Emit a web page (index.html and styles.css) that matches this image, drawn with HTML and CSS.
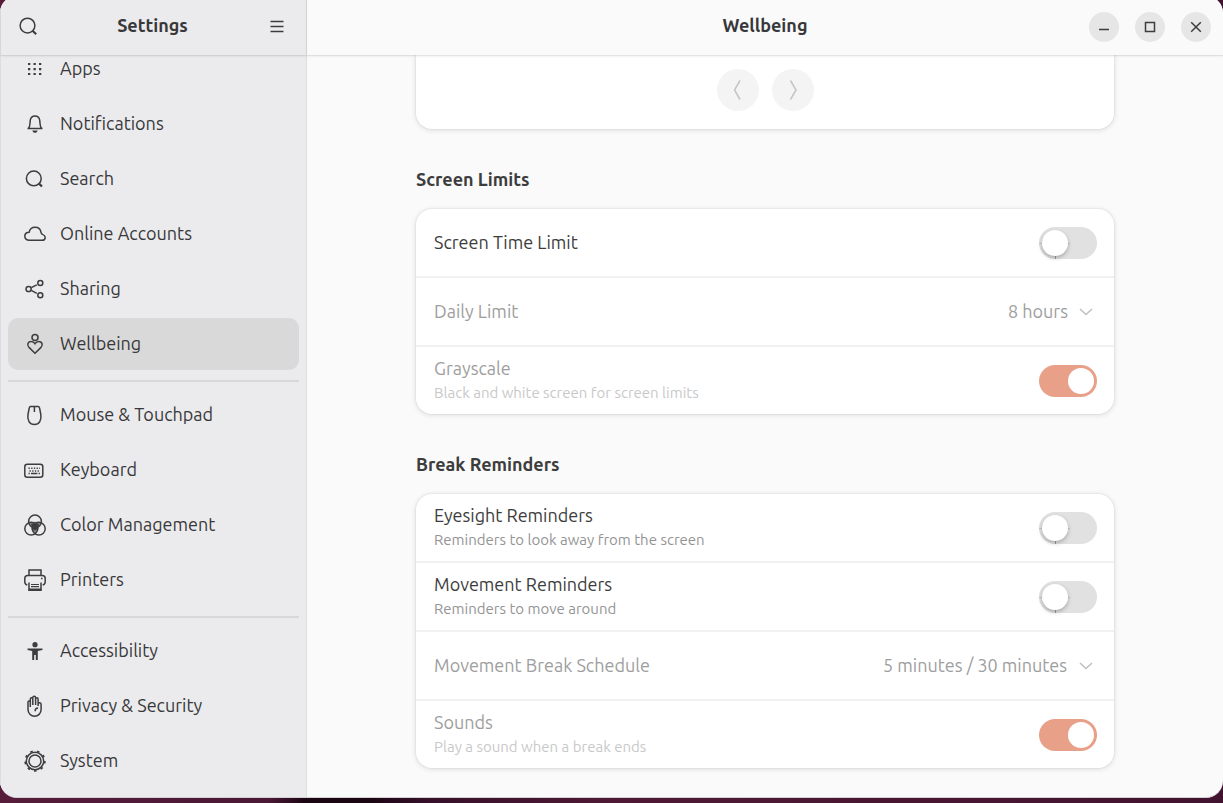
FILE: index.html
```html
<!DOCTYPE html>
<html lang="en">
<head>
<meta charset="utf-8">
<title>Settings – Wellbeing</title>
<link rel="stylesheet" href="styles.css">
</head>
<body>
<div class="window">
  <aside class="sidebar">
    <header class="bar side-bar">
      <button class="icon-button" aria-label="Search">
        <svg width="20" height="20" viewBox="0 0 20 20"><circle cx="9.500" cy="8.600" r="7.400"/><path d="M14.600 13.800l3.600 3.400" stroke-width="2.200"/></svg>
      </button>
      <h1 class="bar-title">Settings</h1>
      <button class="icon-button" aria-label="Main menu">
        <svg width="20" height="20" viewBox="0 0 20 20"><path d="M2.500 4.500h13M2.500 9.500h13M2.500 14.500h13"/></svg>
      </button>
    </header>
    <nav class="scroller" aria-label="Panels">
      <ul class="panels">
        <li><a class="panel" href="#apps"><svg class="icon" viewBox="0 0 22 22"><path class="solid" d="M4 5h2.300v2H4zM9.500 5h2.300v2H9.500zM15 5h2.300v2H15zM4 10h2.300v2.300H4zM9.500 10h2.300v2.300H9.500zM15 10h2.300v2.300H15zM4 15h2.300v2H4zM9.500 15h2.300v2H9.500zM15 15h2.300v2H15z"/></svg>Apps</a></li>
        <li><a class="panel" href="#notifications"><svg class="icon" viewBox="0 0 22 22"><path d="M3.500 15.500h15M4.500 15.200C6.300 13.500 5.800 10.500 6.300 7.200C6.700 4.300 8.500 3 11 3s4.300 1.300 4.700 4.200c.5 3.300 0 6.300 1.800 8"/><path class="solid" d="M8.300 17.500h5.400c-.5 1.600-1.400 2.300-2.700 2.300s-2.300-.7-2.700-2.300z"/></svg>Notifications</a></li>
        <li><a class="panel" href="#search"><svg class="icon" viewBox="0 0 22 22"><circle cx="9.800" cy="10.400" r="7.400"/><path d="M15 15.600l3 2.900" stroke-width="2.200"/></svg>Search</a></li>
        <li><a class="panel" href="#online"><svg class="icon" viewBox="0 0 22 22"><path d="M5.300 17.300C2.500 17.300.8 15.600.8 13.300c0-2.200 1.700-3.900 4.300-4C5.700 6 8.200 4.200 11.200 4.200c3.500 0 5.400 2.200 5.800 5.200.2 1.300.7 1.700 1.900 2.200 1.400.5 2.300 1.500 2.300 2.800 0 1.700-1.300 2.900-3.200 2.900z"/></svg>Online Accounts</a></li>
        <li><a class="panel" href="#sharing"><svg class="icon" viewBox="0 0 22 22"><circle cx="4.600" cy="11" r="2.600"/><circle cx="16.300" cy="5" r="2.500"/><circle cx="16.300" cy="17.300" r="2.500"/><path d="M7.300 9.700L12.800 6.800M7.300 12.300l5.500 3"/></svg>Sharing</a></li>
        <li><a class="panel selected" href="#wellbeing" aria-current="page"><svg class="icon" viewBox="0 0 22 22"><circle cx="11" cy="4.500" r="3"/><path d="M11 20.200L5 14.400C2.400 11.700 4.200 8.300 7.200 8.400c1.700 0 3 1 3.800 2.300.8-1.300 2.100-2.300 3.800-2.300 3 0 4.800 3.300 2.200 6z"/></svg>Wellbeing</a></li>
        <li class="divider" role="separator"></li>
        <li><a class="panel" href="#mouse"><svg class="icon" viewBox="0 0 22 22"><path d="M6.600 2.600h7.600c.8 0 1.100.5 1.400 1.600l1.200 6.300c1 5.600-1.500 9.900-6.400 9.900S3 16.100 4 10.500l1.200-6.300c.3-1.100.6-1.600 1.400-1.600zM10.400 3v5"/></svg>Mouse &amp; Touchpad</a></li>
        <li><a class="panel" href="#keyboard"><svg class="icon" viewBox="0 0 22 22"><rect x=".8" y="5.300" width="18" height="13" rx="2.500"/><path d="M4.500 9.300h11.500M5.500 11.900h10" stroke-dasharray="1.300 1.400"/><path d="M4.500 14.500h1.300M7 14.500h6.400M14.600 14.500h1.300"/></svg>Keyboard</a></li>
        <li><a class="panel" href="#color"><svg class="icon" viewBox="0 0 22 22"><path class="shade" d="M4.600 8.600c4-1.300 8.800-1.300 12.800 0l-2.400 4.800c-.3 3-1.700 5.500-4 6.800-2.300-1.300-3.700-3.800-4-6.800z"/><path class="solid" d="M7 10c2.500-1 5.500-1 8 0l-1.200 4c-1 1.500-1.500 2-2.800 2.400-1.300-.4-2-1-2.800-2.400z"/><circle cx="11" cy="7.500" r="6.400"/><circle cx="7.200" cy="14.700" r="6.400"/><circle cx="14.800" cy="14.700" r="6.400"/></svg>Color Management</a></li>
        <li><a class="panel" href="#printers"><svg class="icon" viewBox="0 0 22 22"><path d="M5 6.500V1h12v5.500M3.300 16C1.600 15.500.8 14.500.8 13V9.500c0-2 1.200-3 3-3h14.400c1.800 0 3 1 3 3V13c0 1.500-.8 2.500-2.500 3M17 9.500h1.500"/><path d="M7 15.500h8M7 17.700h8" stroke-width="1.200"/><path d="M5 13.500v7.500h12v-7.500"/><path class="solid" d="M4.500 19.500h13V22h-13z"/></svg>Printers</a></li>
        <li class="divider" role="separator"></li>
        <li><a class="panel" href="#accessibility"><svg class="icon" viewBox="0 0 22 22"><circle class="solid" cx="11" cy="4.700" r="2.600"/><path class="solid" d="M3.500 8.500h15v1.600l-4.700 1V20h-2v-5h-1.600v5h-2v-8.900l-4.700-1z"/></svg>Accessibility</a></li>
        <li><a class="panel" href="#privacy"><svg class="icon" viewBox="0 0 22 22"><path d="M4 13V7.200c0-1.700 2.300-1.700 2.300 0V12M6.300 11V4.200c0-1.800 2.500-1.800 2.500 0V10M8.800 9V2.700c0-1.800 2.800-1.800 2.800 0V10M11.600 4.200c0-1.800 2.500-1.800 2.500 0v6.900M14.100 11V9c.5-2 3-1.500 3 .5v5c0 4-3 6.700-6.600 6.700S4 18 4 14.500V13M14.100 13c-1.800 0-3 1.200-3 3.200"/></svg>Privacy &amp; Security</a></li>
        <li><a class="panel" href="#system"><svg class="icon" viewBox="0 0 22 22"><circle cx="11" cy="11" r="8.700"/><circle cx="11" cy="11" r="6"/><circle cx="11" cy="11" r="9.900" stroke-width="1.600" stroke-dasharray="2.600 4.310"/></svg>System</a></li>
      </ul>
    </nav>
  </aside>
  <main class="content">
    <header class="bar main-bar">
      <h1 class="bar-title">Wellbeing</h1>
      <div class="controls">
        <button class="control" aria-label="Minimize"><svg width="14" height="14" viewBox="0 0 14 14"><path d="M2 9.500h10"/></svg></button>
        <button class="control" aria-label="Maximize"><svg width="14" height="14" viewBox="0 0 14 14"><path d="M2.500 2.500h9v9h-9z"/></svg></button>
        <button class="control" aria-label="Close"><svg width="14" height="14" viewBox="0 0 14 14"><path d="M2.200 2.200l9.600 9.600M11.800 2.200l-9.600 9.600"/></svg></button>
      </div>
    </header>
    <div class="scroller">
      <div class="page">
        <div class="card pager">
          <button class="round" aria-label="Previous" disabled><svg width="20" height="24" viewBox="0 0 20 24"><path d="M12 2.500L6.500 12l5.500 9.500"/></svg></button>
          <button class="round" aria-label="Next" disabled><svg width="20" height="24" viewBox="0 0 20 24"><path d="M7.500 2.500L13 12l-5.500 9.500"/></svg></button>
        </div>
        <section class="group">
          <h2 class="group-title">Screen Limits</h2>
          <div class="card">
            <div class="row">
              <label class="label" for="time-limit">Screen Time Limit</label>
              <input class="switch" type="checkbox" id="time-limit">
            </div>
            <div class="row dim">
              <label class="label" for="daily">Daily Limit</label>
              <div class="picker"><select id="daily" disabled><option>8 hours</option></select><svg class="chevron" viewBox="0 0 14 8"><path d="M1 1l6 5.500L13 1"/></svg></div>
            </div>
            <div class="row dim">
              <label class="label" for="gray">Grayscale<small>Black and white screen for screen limits</small></label>
              <input class="switch" type="checkbox" id="gray" checked disabled>
            </div>
          </div>
        </section>
        <section class="group">
          <h2 class="group-title">Break Reminders</h2>
          <div class="card">
            <div class="row">
              <label class="label" for="eye">Eyesight Reminders<small>Reminders to look away from the screen</small></label>
              <input class="switch" type="checkbox" id="eye">
            </div>
            <div class="row">
              <label class="label" for="move">Movement Reminders<small>Reminders to move around</small></label>
              <input class="switch" type="checkbox" id="move">
            </div>
            <div class="row dim">
              <label class="label" for="schedule">Movement Break Schedule</label>
              <div class="picker"><select id="schedule" disabled><option>5 minutes / 30 minutes</option></select><svg class="chevron" viewBox="0 0 14 8"><path d="M1 1l6 5.500L13 1"/></svg></div>
            </div>
            <div class="row dim">
              <label class="label" for="sounds">Sounds<small>Play a sound when a break ends</small></label>
              <input class="switch" type="checkbox" id="sounds" checked disabled>
            </div>
          </div>
        </section>
      </div>
    </div>
  </main>
</div>
</body>
</html>
```
FILE: styles.css
```css
* { box-sizing: border-box; }

body {
  margin: 0;
  height: 100vh;
  padding-bottom: 5px;
  display: flex;
  overflow: hidden;
  background: linear-gradient(90deg, #561c3a 0%, #4a1735 22%, #1a0512 25%, #1a0512 30%, #36102a 35%, #4f1935 50%, #42132f 100%);
  color: #3d3d3d;
  font-family: Ubuntu, "Open Sans", "Noto Sans", sans-serif;
  font-size: 18px;
  line-height: 24px;
}

svg { display: block; fill: none; stroke: #3d3d3d; stroke-width: 1.5; }
.solid { fill: #3d3d3d; stroke: none; }
.shade { fill: #8a8a8c; stroke: none; }

button {
  border: 0;
  padding: 0;
  background: none;
  display: grid;
  place-items: center;
}

.window {
  flex: 1;
  display: flex;
  min-width: 0;
  margin-top: -4px;
  border-radius: 17px;
  overflow: hidden;
  background: #fafafa;
  border-bottom: 1px solid #d5d0d3;
}

.sidebar {
  width: 307px;
  flex: none;
  display: flex;
  flex-direction: column;
  background: #ebebed;
  border-right: 1px solid #dfdfe1;
  border-left: 1px solid #e2dade;
}

.content {
  flex: 1;
  min-width: 0;
  display: flex;
  flex-direction: column;
}

.bar {
  flex: none;
  height: 59px;
  padding-top: 3px;
  display: grid;
  align-items: center;
  position: relative;
  z-index: 1;
  box-shadow: 0 1px 1px rgba(0, 0, 0, .08), 0 2px 3px rgba(0, 0, 0, .04);
}
.side-bar { grid-template-columns: 54px 1fr 56px; background: #ebebed; }
.main-bar { grid-template-columns: 1fr auto 1fr; background: #fafafa; }
.main-bar .bar-title { grid-column: 2; }
.bar-title {
  margin: 0;
  padding-bottom: 4px;
  font-size: 18px;
  font-weight: 700;
  text-align: center;
  color: #38383a;
}
.icon-button { height: 40px; }

.controls { display: flex; justify-content: flex-end; gap: 16px; padding-right: 12px; }
.control { width: 30px; height: 30px; border-radius: 50%; background: #e6e6e6; }

.scroller { flex: 1; min-height: 0; overflow: hidden; }

.panels {
  list-style: none;
  margin: -12px 0 0;
  padding: 0 7px;
  display: flex;
  flex-direction: column;
  gap: 3px;
}
.panel {
  display: flex;
  align-items: center;
  gap: 14px;
  height: 52px;
  padding: 0 16px 2px;
  border-radius: 10px;
  color: #38383a;
  text-decoration: none;
}
.selected { background: #d9d9d9; }
.icon { width: 22px; height: 22px; flex: none; margin-top: 2px; }
.divider { height: 2px; margin: 7px 0 4px; background: #d8d8da; }

.page {
  max-width: 698px;
  margin: 0 auto;
}
.card {
  background: #fff;
  border-radius: 16px;
  box-shadow: 0 0 1px 1px rgba(0, 0, 0, .04), 0 1px 5px 1px rgba(0, 0, 0, .09);
}
.pager {
  display: flex;
  justify-content: center;
  gap: 13px;
  padding: 14px 0 18px;
  border-radius: 0 0 16px 16px;
}
.round { width: 42px; height: 42px; border-radius: 50%; background: #f4f4f4; }
.round svg { stroke: #c4c4c4; }

.group { padding-top: 38px; }
.group-title { margin: 0 0 18px; font-size: 18px; line-height: 24px; font-weight: 700; }

.row {
  display: flex;
  align-items: center;
  justify-content: space-between;
  height: 69px;
  padding: 0 17px 0 18px;
  border-bottom: 2px solid #f1f1f1;
}
.row:last-child { height: 67px; border-bottom: 0; }
.label { padding-bottom: 1px; }
.label small { display: block; margin-top: 1px; font-size: 15px; line-height: 24px; color: #949494; }
.dim .label, .dim select { color: #9e9e9e; }
.dim small { color: #c9c9c9; }

.picker { display: flex; align-items: center; gap: 11px; padding-right: 4px; }
.picker select {
  appearance: none;
  border: 0;
  padding: 0 0 2px;
  background: none;
  font: inherit;
  opacity: 1;
}
.chevron { width: 14px; height: 8px; stroke: #c0c0c0; }

.switch {
  appearance: none;
  flex: none;
  margin: 0;
  width: 58px;
  height: 32px;
  padding: 3px;
  border-radius: 16px;
  background: #e1e1e1;
  display: flex;
}
.switch::before {
  content: "";
  width: 26px;
  height: 26px;
  border-radius: 50%;
  background: #fff;
  box-shadow: 0 2px 4px rgba(0, 0, 0, .25);
}
/* hairline marks under and beside the knob */
.switch:not(:checked) {
  background:
    linear-gradient(#9a9a9a, #9a9a9a) 16px 100% / 1px 3px no-repeat,
    linear-gradient(#c4c4c4, #c4c4c4) 0 16px / 31px 1px no-repeat,
    #e1e1e1;
}
.switch:checked { background: #e8a188; justify-content: flex-end; }
.switch:checked::before { box-shadow: none; }
```
